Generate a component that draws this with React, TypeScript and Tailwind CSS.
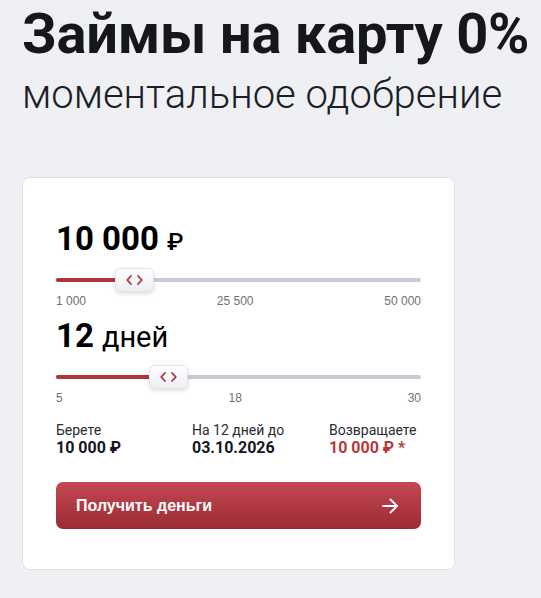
import React from 'react';

function Thumb() {
  return (
    <div className="absolute top-1/2 -translate-y-1/2 w-[39px] h-[24px] rounded-[5px] bg-gradient-to-b from-white to-[#eceef4] border border-[#e3e4ea] shadow-[0_2px_4px_rgba(0,0,0,0.12)] flex items-center justify-center gap-[5px]">
      <svg width="6" height="10" viewBox="0 0 6 10" fill="none">
        <path d="M5 1L1.2 5L5 9" stroke="#a8323e" strokeWidth="1.8" strokeLinecap="round" strokeLinejoin="round" />
      </svg>
      <svg width="6" height="10" viewBox="0 0 6 10" fill="none">
        <path d="M1 1L4.8 5L1 9" stroke="#a8323e" strokeWidth="1.8" strokeLinecap="round" strokeLinejoin="round" />
      </svg>
    </div>
  );
}

function Slider({ fill, thumbLeft, labels }: { fill: number; thumbLeft: number; labels: string[] }) {
  return (
    <div>
      <div className="relative h-[24px] flex items-center">
        <div className="w-full h-[4px] rounded-full bg-[#c9c9d4] overflow-hidden">
          <div className="h-full bg-[#b2343a]" style={{ width: fill }} />
        </div>
        <div className="absolute inset-y-0" style={{ left: thumbLeft }}>
          <Thumb />
        </div>
      </div>
      <div className="flex justify-between text-[12px] leading-[18px] text-[#6f6f76] font-['Liberation_Sans',sans-serif]">
        {labels.map(l => <span key={l}>{l}</span>)}
      </div>
    </div>
  );
}

export default function App() {
  return (
    <div className="min-h-[598px] bg-[#eef0f4] font-['Roboto',sans-serif] text-[#15171c] pl-[22px] pt-[2px]">
      <h1 className="text-[56px] leading-[64px] font-bold tracking-[-0.2px]">Займы на карту 0%</h1>
      <p className="text-[40px] leading-[48px] font-light text-[#1c1e24] mt-[5px]">моментальное одобрение</p>

      <div className="mt-[58px] w-[433px] bg-white rounded-[8px] border border-[#dfe2e8] px-[33px] pt-[41px] pb-[40px]">
        <div className="flex items-baseline gap-[8px] leading-[40px]">
          <span className="text-[33px] font-bold text-black">10 000</span>
          <span className="text-[24px] font-medium text-black">₽</span>
        </div>
        <div className="mt-[6px]">
          <Slider fill={64} thumbLeft={59} labels={['1 000', '25 500', '50 000']} />
        </div>

        <div className="flex items-baseline gap-[8px] leading-[40px] mt-[6px]">
          <span className="text-[33px] font-bold text-black">12</span>
          <span className="text-[29px] font-normal text-black">дней</span>
        </div>
        <div className="mt-[8px]">
          <Slider fill={95} thumbLeft={93} labels={['5', '18', '30']} />
        </div>

        <div className="grid grid-cols-[136px_137px_1fr] mt-[15px] text-[14px] leading-[17px]">
          <div>
            <div className="text-[#2a2c31]">Берете</div>
            <div className="font-bold text-[16px] text-[#15171c]">10 000 ₽</div>
          </div>
          <div>
            <div className="text-[#2a2c31]">На 12 дней до</div>
            <div className="font-bold text-[16px] text-[#15171c]">03.10.2026</div>
          </div>
          <div>
            <div className="text-[#2a2c31]">Возвращаете</div>
            <div className="font-bold text-[16px] text-[#b63a3a]">10 000 ₽ *</div>
          </div>
        </div>

        <button className="mt-[26px] w-full h-[47px] rounded-[7px] bg-gradient-to-b from-[#c44852] to-[#9c2a35] flex items-center justify-between pl-[20px] pr-[23px] text-white">
          <span className="font-bold text-[16px] font-['Liberation_Sans',sans-serif]">Получить деньги</span>
          <svg width="16" height="16" viewBox="0 0 16 16" fill="none">
            <path d="M1 8H15M8.5 1.5L15 8L8.5 14.5" stroke="white" strokeWidth="1.9" strokeLinecap="round" strokeLinejoin="round" />
          </svg>
        </button>
      </div>
    </div>
  );
}
